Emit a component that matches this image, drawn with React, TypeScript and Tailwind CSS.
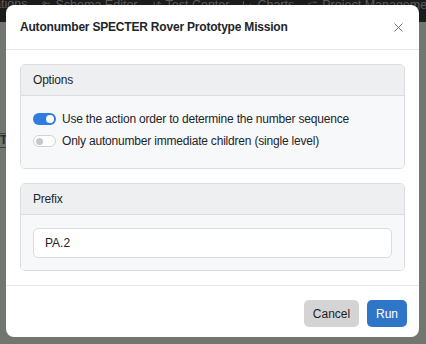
import { X, Settings2, ArrowDownUp, LineChart, ListChecks } from "lucide-react";

function Toggle({ on }: { on: boolean }) {
  return on ? (
    <span className="flex h-[12px] w-[23px] items-center justify-end rounded-full bg-[#2f7de1] px-[2px]">
      <span className="h-[8px] w-[8px] rounded-full bg-white" />
    </span>
  ) : (
    <span className="flex h-[12px] w-[23px] items-center rounded-full border border-[#cfd2d6] bg-white px-[2px]">
      <span className="h-[7px] w-[7px] rounded-full bg-[#c6c8cb]" />
    </span>
  );
}

export default function App() {
  const options = [
    { id: 1, label: "Use the action order to determine the number sequence", on: true },
    { id: 2, label: "Only autonumber immediate children (single level)", on: false },
  ];

  return (
    <div
      className="relative h-[344px] w-[426px] overflow-hidden bg-[#71766f] text-[#212529]"
      style={{ fontFamily: '"Liberation Sans", Arial, sans-serif' }}
    >
      {/* dimmed app behind the modal */}
      <div className="flex h-[22px] items-start gap-[13px] whitespace-nowrap bg-[#1c1c1c] text-[12.5px] leading-[9px] text-[#5b5b5b]">
        <span className="-ml-[10px]">rations</span>
        <span className="flex items-center gap-[4px]"><Settings2 size={11} />Schema Editor</span>
        <span className="flex items-center gap-[4px]"><ArrowDownUp size={11} />Test Center</span>
        <span className="flex items-center gap-[4px]"><LineChart size={11} />Charts</span>
        <span className="flex items-center gap-[4px]"><ListChecks size={11} />Project Management</span>
      </div>
      <div className="mt-[111px] w-[8px] border-y border-[#3f423e] text-[12px] font-bold leading-[13px] text-[#2a2c29]">TE</div>

      {/* modal */}
      <div className="absolute left-[6px] top-[5px] flex h-[332px] w-[413px] flex-col overflow-hidden rounded-[8px] bg-white">
        <div className="flex h-[45px] items-center justify-between border-b border-[#e6e6e6] pl-[14px] pr-[13px]">
          <h2 className="text-[12px] font-bold tracking-[-0.2px]">Autonumber SPECTER Rover Prototype Mission</h2>
          <X size={15} strokeWidth={1.5} className="text-[#6a6a6a]" />
        </div>

        <div className="flex flex-col gap-[14px] px-[14px] pb-[14px] pt-[14px]">
          <div className="overflow-hidden rounded-[5px] border border-[#dcdde0]">
            <div className="flex h-[31px] items-center border-b border-[#dcdde0] bg-[#eeeff1] px-[12px] text-[12px] tracking-[-0.2px]">
              Options
            </div>
            <div className="flex flex-col gap-[2px] bg-[#f7f8fa] px-[12px] pb-[17px] pt-[13px]">
              {options.map((o) => (
                <div key={o.id} className="flex h-[20px] items-center gap-[6px] text-[12px] tracking-[-0.2px]">
                  <Toggle on={o.on} />
                  <span>{o.label}</span>
                </div>
              ))}
            </div>
          </div>

          <div className="overflow-hidden rounded-[5px] border border-[#dcdde0]">
            <div className="flex h-[31px] items-center border-b border-[#dcdde0] bg-[#eeeff1] px-[12px] text-[12px] tracking-[-0.2px]">
              Prefix
            </div>
            <div className="bg-[#f7f8fa] px-[12px] pb-[12px] pt-[13px]">
              <div className="flex h-[30px] items-center rounded-[5px] border border-[#dcdde0] bg-white px-[11px] text-[12px]">
                PA.2
              </div>
            </div>
          </div>
        </div>

        <div className="flex flex-1 items-start justify-end gap-[8px] border-t border-[#e6e6e6] pl-[13px] pr-[12px] pt-[14px]">
          <button className="h-[27px] w-[55px] rounded-[5px] bg-[#d4d4d4] text-[12px] text-[#222]">Cancel</button>
          <button className="h-[27px] w-[40px] rounded-[5px] bg-[#2f75c8] text-[12px] text-white">Run</button>
        </div>
      </div>
    </div>
  );
}
